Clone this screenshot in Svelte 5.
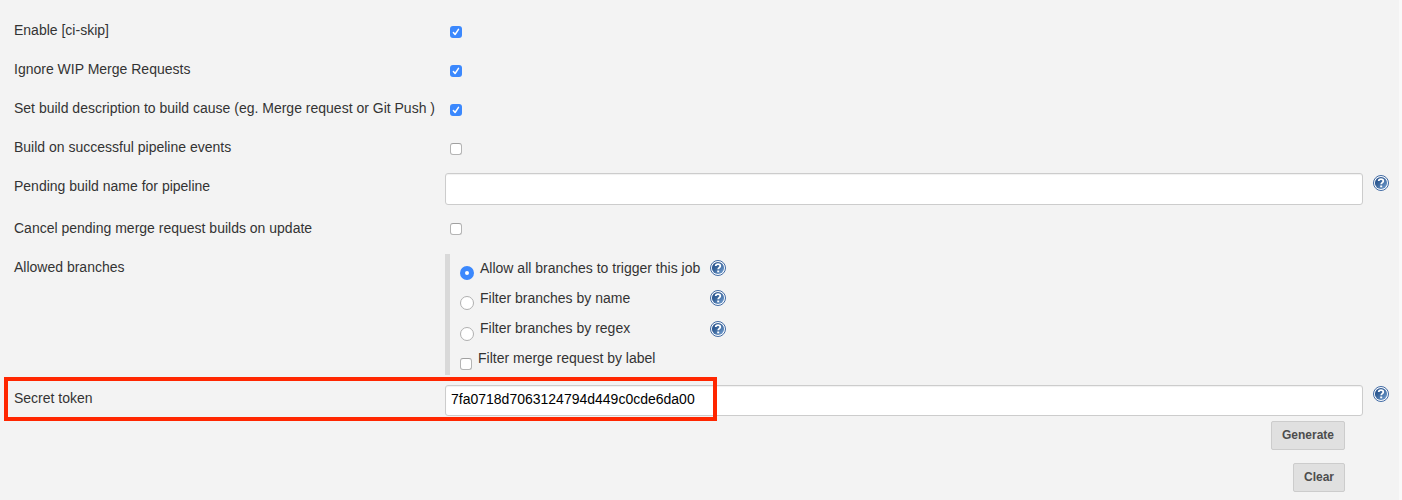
<script>
  const toggles = [
    { label: 'Enable [ci-skip]', checked: true },
    { label: 'Ignore WIP Merge Requests', checked: true },
    { label: 'Set build description to build cause (eg. Merge request or Git Push )', checked: true },
    { label: 'Build on successful pipeline events', checked: false }
  ];
  const filters = ['Allow all branches to trigger this job', 'Filter branches by name', 'Filter branches by regex'];
</script>

{#snippet help()}
  <svg class="help" width="16" height="16" viewBox="0 0 16 16" aria-label="Help">
    <defs>
      <linearGradient id="ball" x1="0" y1="0" x2="1" y2="1">
        <stop offset="0" stop-color="#204a87" />
        <stop offset="0.4" stop-color="#366299" />
        <stop offset="1" stop-color="#7ba6d6" />
      </linearGradient>
    </defs>
    <circle cx="8" cy="8" r="7.5" fill="#fff" stroke="#3f69a3" stroke-width="1" />
    <circle cx="8" cy="8" r="6.1" fill="url(#ball)" />
    <path d="M5.7 6.1C5.7 3.3 10.3 3.4 10.3 6C10.3 7.6 8.2 7.7 8.2 9.3" fill="none" stroke="#fff" stroke-width="1.8" />
    <rect x="7.2" y="10.5" width="2" height="1.8" fill="#fff" />
  </svg>
{/snippet}

{#snippet box(checked)}
  <span class="box" class:checked role="checkbox" aria-checked={checked} aria-label="option" tabindex="-1">
    {#if checked}
      <svg width="12" height="12" viewBox="0 0 12 12"><path d="M3.4 6.5L5.1 8.5L8.5 3.4" fill="none" stroke="#fff" stroke-width="1.5" stroke-linecap="round" stroke-linejoin="round" /></svg>
    {/if}
  </span>
{/snippet}

<main>
  {#each toggles as t}
    <div class="row">
      <div class="label"><span>{t.label}</span></div>
      <div class="check">{@render box(t.checked)}</div>
    </div>
  {/each}
  <div class="row tall">
    <div class="label">Pending build name for pipeline</div>
    <input class="field" aria-label="Pending build name" />
    {@render help()}
  </div>
  <div class="row">
    <div class="label">Cancel pending merge request builds on update</div>
    <div class="check up">{@render box(false)}</div>
  </div>
  <div class="row branches">
    <div class="label">Allowed branches</div>
    <div class="group">
      {#each filters as f, i}
        <div class="choice" class:last={i === 2}>
          <span class="radio" class:on={i === 0}></span>
          <span class="text">{f}</span>
          {@render help()}
        </div>
      {/each}
      <div class="choice merge">
        {@render box(false)}
        <span class="text">Filter merge request by label</span>
      </div>
    </div>
  </div>
  <div class="row tall token">
    <div class="label">Secret token</div>
    <input class="field" aria-label="Secret token" value="7fa0718d7063124794d449c0cde6da00" />
    {@render help()}
    <div class="frame"></div>
  </div>
  <div class="actions">
    <button>Generate</button>
    <button>Clear</button>
  </div>
</main>

<style>
  :global(body) { background: #f9f9f9; overflow: hidden; }
  main {
    box-sizing: border-box;
    width: 1399px;
    height: 500px;
    padding-top: 11px;
    overflow: hidden;
    background: #f3f3f3;
    color: #333;
    font: 14px/20px "Liberation Sans", Arial, sans-serif;
  }
  .row {
    position: relative;
    display: grid;
    grid-template-columns: 431px 918px 16px;
    column-gap: 0;
    height: 39px;
    padding-left: 14px;
    align-items: start;
  }
  .tall { height: 42px; }
  .label { padding-top: 9px; white-space: nowrap; }
  .check { padding: 15px 0 0 5px; }
  .check.up { padding-top: 14px; }
  .box {
    display: block;
    box-sizing: border-box;
    flex: none;
    width: 12px;
    height: 12px;
    border: 1px solid #b4b4b4;
    border-top-color: #a0a0a0;
    border-radius: 3px;
    background: #fff;
  }
  .box.checked { border: 0; background: #3b88fd; }
  .box svg { display: block; }
  .field {
    box-sizing: border-box;
    width: 918px;
    height: 32px;
    margin: 6px 0 0;
    padding: 0 5px 3px;
    border: 1px solid #ccc;
    border-radius: 3px;
    background: #fff;
    color: #000;
    font: 14px "Liberation Sans", Arial, sans-serif;
    box-shadow: inset 0 1px 1px rgba(0, 0, 0, 0.06);
  }
  .token .field { height: 31px; }
  .help { display: block; flex: none; }
  .row > .help { margin: 8px 0 0 10px; }
  .token > .help { margin-top: 7px; }
  .branches { height: 131px; }
  .group {
    box-sizing: border-box;
    height: 121px;
    margin-top: 6px;
    padding: 4px 0 0 10px;
    border-left: 5px solid #d9d9d9;
  }
  .choice { display: flex; height: 30px; align-items: flex-start; }
  .choice .text { width: 230px; margin-left: 6px; white-space: nowrap; }
  .choice .help { margin-top: 2px; }
  .last .help { margin-top: 3px; }
  .radio {
    box-sizing: border-box;
    flex: none;
    width: 14px;
    height: 14px;
    margin-top: 8px;
    border: 1px solid #b0b0b0;
    border-radius: 50%;
    background: #fff;
  }
  .last .radio { margin-top: 9px; }
  .radio.on { border: 5px solid #3b88fd; }
  .merge .box { margin-top: 10px; }
  .frame {
    position: absolute;
    left: 4px;
    top: -2px;
    box-sizing: border-box;
    width: 713px;
    height: 44px;
    border: 4px solid #ff2600;
    pointer-events: none;
  }
  .actions {
    display: flex;
    flex-direction: column;
    align-items: flex-end;
    gap: 13px;
    padding-right: 54px;
  }
  button {
    box-sizing: border-box;
    height: 29px;
    margin: 0;
    padding: 0 10px 1px;
    border: 1px solid #ccc;
    border-radius: 2px;
    background: #e0e0e0;
    color: #4d4d4d;
    font: bold 12px "Liberation Sans", Arial, sans-serif;
  }
</style>
